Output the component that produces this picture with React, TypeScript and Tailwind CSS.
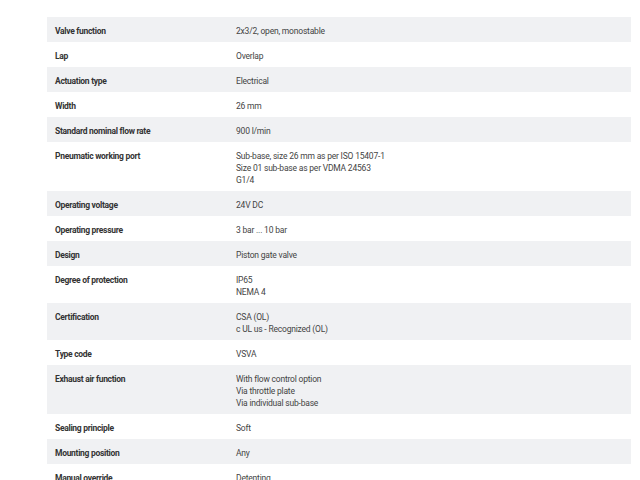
const rows: [string, string[]][] = [
  ["Valve function", ["2x3/2, open, monostable"]],
  ["Lap", ["Overlap"]],
  ["Actuation type", ["Electrical"]],
  ["Width", ["26 mm"]],
  ["Standard nominal flow rate", ["900 l/min"]],
  [
    "Pneumatic working port",
    ["Sub-base, size 26 mm as per ISO 15407-1", "Size 01 sub-base as per VDMA 24563", "G1/4"],
  ],
  ["Operating voltage", ["24V DC"]],
  ["Operating pressure", ["3 bar ... 10 bar"]],
  ["Design", ["Piston gate valve"]],
  ["Degree of protection", ["IP65", "NEMA 4"]],
  ["Certification", ["CSA (OL)", "c UL us - Recognized (OL)"]],
  ["Type code", ["VSVA"]],
  ["Exhaust air function", ["With flow control option", "Via throttle plate", "Via individual sub-base"]],
  ["Sealing principle", ["Soft"]],
  ["Mounting position", ["Any"]],
  ["Manual override", ["Detenting"]],
];

export default function App() {
  return (
    <div
      className="w-[640px] h-[480px] overflow-hidden bg-white pt-[17px]"
      style={{ fontFamily: 'Roboto, "Liberation Sans", sans-serif' }}
    >
      <div className="ml-[47px] w-[584px]">
        {rows.map(([label, values], i) => (
          <div
            key={label}
            className={`flex pt-[8px] pb-[5px] text-[8.5px] leading-[12px] ${i % 2 === 0 ? "bg-[#f0f1f3]" : "bg-white"}`}
          >
            <div className="w-[189px] shrink-0 pl-[8px] font-bold tracking-[-0.3px] text-[#333]">{label}</div>
            <div className="tracking-[-0.2px] text-[#444]">
              {values.map((v) => (
                <div key={v}>{v}</div>
              ))}
            </div>
          </div>
        ))}
      </div>
    </div>
  );
}
